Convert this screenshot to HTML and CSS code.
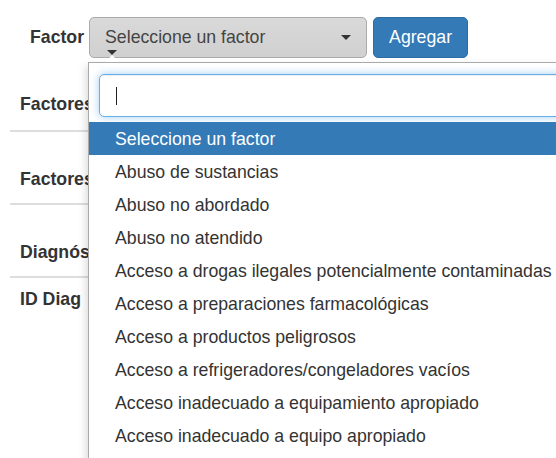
FILE: index.html
```html
<!DOCTYPE html>
<html lang="es">
<head>
  <meta charset="UTF-8" />
  <title>Factores de riesgo</title>
  <link rel="stylesheet" href="styles.css">
</head>
<body>

<div class="toolbar">
  <label class="toolbar-label">Factor</label>
  <div class="select-box">
    <span class="select-text">Seleccione un factor</span>
    <span class="select-arrow"></span>
  </div>
  <button class="btn-primary">Agregar</button>
</div>

<!-- Secciones del formulario (quedan tapadas por el desplegable) -->
<div class="sections">
  <div class="section"><span class="section-title">Factores relacionados</span></div>
  <div class="section"><span class="section-title">Factores de riesgo</span></div>
  <div class="section"><span class="section-title">Diagnósticos</span></div>
  <div class="section section-plain"><span class="section-title">ID Diag</span></div>
</div>

<!-- Desplegable abierto del select -->
<svg class="dropdown-notch" width="16" height="12" viewBox="0 0 16 12">
  <polygon points="2,0 12,0 7,5" fill="#333" />
  <polygon points="1,12 7,5 14,12" fill="#fff" />
</svg>

<div class="dropdown">
  <div class="search-box"><span class="caret"></span></div>
  <ul class="options">
    <li class="option active">Seleccione un factor</li>
    <li class="option">Abuso de sustancias</li>
    <li class="option">Abuso no abordado</li>
    <li class="option">Abuso no atendido</li>
    <li class="option">Acceso a drogas ilegales potencialmente contaminadas</li>
    <li class="option">Acceso a preparaciones farmacológicas</li>
    <li class="option">Acceso a productos peligrosos</li>
    <li class="option">Acceso a refrigeradores/congeladores vacíos</li>
    <li class="option">Acceso inadecuado a equipamiento apropiado</li>
    <li class="option">Acceso inadecuado a equipo apropiado</li>
  </ul>
</div>

</body>
</html>
```

FILE: styles.css
```css
body {
  font-family: "Liberation Sans", Arial, sans-serif;
  font-size: 17.7px;
  color: #333;
  background: #fff;
  margin: 0;
  overflow: hidden;
}
.toolbar {
  display: flex;
  align-items: center;
  padding: 17px 0 0 30px;
}
.toolbar-label {
  font-weight: bold;
  margin-right: 5px;
}
.select-box {
  width: 278px;
  height: 41px;
  box-sizing: border-box;
  border: 1px solid #aaa;
  border-radius: 5px;
  background: linear-gradient(#d9d9d9, #d0d0d0);
  display: flex;
  align-items: center;
  justify-content: space-between;
  padding: 0 15px;
}
.select-text {
  color: #444;
}
.select-arrow {
  width: 0;
  height: 0;
  border-left: 5px solid transparent;
  border-right: 5px solid transparent;
  border-top: 5px solid #333;
}
.btn-primary {
  margin-left: 6px;
  width: 95px;
  height: 41px;
  font-family: inherit;
  font-size: 17.7px;
  color: #fff;
  background-color: #337ab7;
  border: 1px solid #2e6da4;
  border-radius: 5px;
  padding: 0;
}
.sections {
  margin: 1px 0 0 10px;
  width: 78px;
  overflow: hidden;
}
.section {
  height: 73px;
  box-sizing: border-box;
  border-bottom: 2px solid #ddd;
  display: flex;
  align-items: flex-end;
  padding: 0 0 13px 10px;
  font-weight: bold;
  white-space: nowrap;
}
.section:first-child {
  padding-bottom: 15px;
}
.section-plain {
  border-bottom: none;
  align-items: flex-start;
  padding-top: 11px;
}
.dropdown-notch {
  position: absolute;
  left: 105px;
  top: 50px;
  z-index: 3;
}
.dropdown {
  position: absolute;
  left: 88px;
  top: 62px;
  width: 520px;
  height: 400px;
  background: #fff;
  border: 1px solid #aaa;
  box-shadow: -2px 4px 8px rgba(0, 0, 0, 0.15);
  padding-top: 11px;
  z-index: 2;
}
.search-box {
  margin-left: 10px;
  height: 43px;
  box-sizing: border-box;
  border: 1px solid #66afe9;
  border-radius: 5px;
  box-shadow: inset 0 1px 1px rgba(0, 0, 0, 0.075), 0 0 8px rgba(102, 175, 233, 0.6);
  display: flex;
  align-items: center;
  padding-left: 16px;
}
.caret {
  width: 1px;
  height: 18px;
  background: #222;
}
.options {
  list-style: none;
  margin: 5px 0 0 0;
  padding: 0;
}
.option {
  height: 33px;
  box-sizing: border-box;
  padding: 2px 0 0 26px;
  line-height: 31px;
  white-space: nowrap;
}
.option.active {
  background-color: #337ab7;
  color: #fff;
}
```
